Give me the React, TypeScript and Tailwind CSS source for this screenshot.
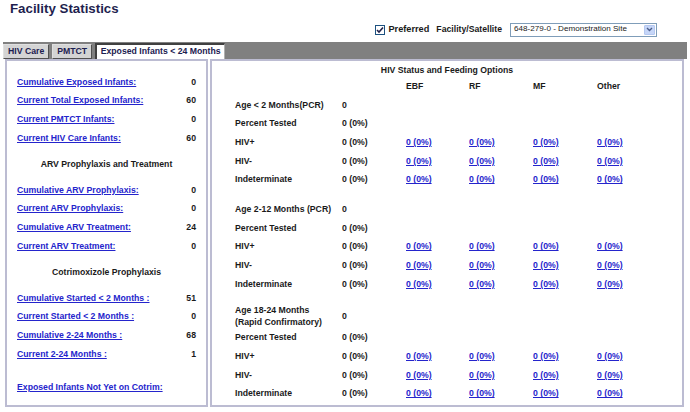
import React from 'react';

/** 左パネルの統計行 */
const exposedRows: [string, string][] = [
  ['Cumulative Exposed Infants:', '0'],
  ['Current Total Exposed Infants:', '60'],
  ['Current PMTCT Infants:', '0'],
  ['Current HIV Care Infants:', '60'],
];

const arvRows: [string, string][] = [
  ['Cumulative ARV Prophylaxis:', '0'],
  ['Current ARV Prophylaxis:', '0'],
  ['Cumulative ARV Treatment:', '24'],
  ['Current ARV Treatment:', '0'],
];

const cotrimRows: [string, string][] = [
  ['Cumulative Started < 2 Months :', '51'],
  ['Current Started < 2 Months :', '0'],
  ['Cumulative 2-24 Months :', '68'],
  ['Current 2-24 Months :', '1'],
];

const ageGroups = ['Age < 2 Months(PCR)', 'Age 2-12 Months (PCR)', 'Age 18-24 Months'];

function StatRow({ label, value }: { label: string; value: string }) {
  return (
    <div className="flex h-[18.67px] items-center justify-between">
      <a href="#" className="text-[#2424cc] underline">
        {label}
      </a>
      <span>{value}</span>
    </div>
  );
}

function SectionHeading({ children }: { children: React.ReactNode }) {
  return <div className="flex h-[33.3px] items-center justify-center">{children}</div>;
}

const grid = 'grid grid-cols-[107px_64px_63px_64px_64px_1fr] items-center';

function Link00() {
  return (
    <a href="#" className="text-[#2424cc] underline">
      0 (0%)
    </a>
  );
}

function ResultRow({ label }: { label: string }) {
  return (
    <div className={`${grid} h-[18.67px]`}>
      <span>{label}</span>
      <span>0 (0%)</span>
      <Link00 />
      <Link00 />
      <Link00 />
      <Link00 />
    </div>
  );
}

function AgeGroup({ index }: { index: number }) {
  const last = index === 2;
  return (
    <div className={index === 0 ? '' : 'mt-[11px]'}>
      <div className={`${grid} ${last ? 'h-[24px]' : 'h-[18.67px]'}`}>
        {last ? (
          <span className="leading-[11.6px]">
            Age 18-24 Months
            <br />
            (Rapid Confirmatory)
          </span>
        ) : (
          <span>{ageGroups[index]}</span>
        )}
        <span>0</span>
      </div>
      <div className={`${grid} h-[18.67px]`}>
        <span>Percent Tested</span>
        <span>0 (0%)</span>
      </div>
      <ResultRow label="HIV+" />
      <ResultRow label="HIV-" />
      <ResultRow label="Indeterminate" />
    </div>
  );
}

function Tab({ label, active }: { label: string; active?: boolean }) {
  if (active) {
    return (
      <div className="flex h-[16px] w-[130px] items-center justify-center border-l-2 border-t-2 border-r border-[#404040] border-r-[#b0b0b0] bg-white text-[#1c2050]">
        {label}
      </div>
    );
  }
  return (
    <div className="flex h-[15px] items-center justify-center border border-[#e0e0e0] border-b-[#505050] border-r-[#505050] bg-[#d4d4d4] px-[4px] text-[#1c2050]">
      {label}
    </div>
  );
}

export default function App() {
  return (
    <div className="h-[412px] w-[690px] bg-white font-['Liberation_Sans',Arial,sans-serif] text-[8.7px] font-bold text-[#1a1a1a]">
      {/* タイトル */}
      <div className="h-[20px] pl-[10px] pt-[1px] text-[13.3px] leading-[16px] text-[#1f1f4f]">
        Facility Statistics
      </div>

      {/* 施設選択 */}
      <div className="flex h-[19px] items-center justify-end pr-[33px]">
        <span className="mr-[3px] flex h-[10px] w-[10px] items-center justify-center border border-[#1c5180] bg-white">
          <svg width="8" height="8" viewBox="0 0 8 8">
            <path d="M1 4 L3 6 L7 1.5" fill="none" stroke="#21214a" strokeWidth="1.6" />
          </svg>
        </span>
        <span className="mr-[7px] text-[9.2px]">Preferred</span>
        <span className="mr-[8px]">Facility/Satellite</span>
        <div className="flex h-[14px] w-[147px] items-center justify-between border border-[#7f9db9] bg-white pl-[3px] pr-[1px] text-[8.1px] font-normal text-[#222]">
          <span>648-279-0 - Demonstration Site</span>
          <span className="flex h-[10px] w-[11px] items-center justify-center rounded-[1px] border border-[#b5c8f0] bg-[#c6d6f8]">
            <svg width="7" height="5" viewBox="0 0 7 5">
              <path d="M1 1 L3.5 3.5 L6 1" fill="none" stroke="#4d5f8c" strokeWidth="1.4" />
            </svg>
          </span>
        </div>
      </div>

      {/* タブ */}
      <div className="mx-[3px] mt-[3px] flex h-[17px] items-end gap-[3px] bg-[#808080]">
        <Tab label="HIV Care" />
        <Tab label="PMTCT" />
        <Tab label="Exposed Infants < 24 Months" active />
      </div>

      {/* パネル */}
      <div className="ml-[5px] mr-[6px] flex gap-[2px]">
        <section className="flex w-[203px] flex-col border-2 border-[#bcbcd2] px-[10px] pt-[12px]">
          {exposedRows.map(([l, v]) => (
            <StatRow key={l} label={l} value={v} />
          ))}
          <SectionHeading>ARV Prophylaxis and Treatment</SectionHeading>
          {arvRows.map(([l, v]) => (
            <StatRow key={l} label={l} value={v} />
          ))}
          <SectionHeading>Cotrimoxizole Prophylaxis</SectionHeading>
          {cotrimRows.map(([l, v]) => (
            <StatRow key={l} label={l} value={v} />
          ))}
          <div className="mt-[15px]">
            <StatRow label="Exposed Infants Not Yet on Cotrim:" value="" />
          </div>
        </section>

        <section className="flex-1 border-2 border-[#bcbcd2] pb-[2px] pl-[23px] pt-[2px]">
          <div className="flex h-[16px] items-center justify-center pr-[23px]">
            HIV Status and Feeding Options
          </div>
          <div className={`${grid} h-[16px]`}>
            <span />
            <span />
            <span>EBF</span>
            <span>RF</span>
            <span>MF</span>
            <span>Other</span>
          </div>
          <div className="mt-[1px]">
            {[0, 1, 2].map((i) => (
              <AgeGroup key={i} index={i} />
            ))}
          </div>
        </section>
      </div>
    </div>
  );
}
